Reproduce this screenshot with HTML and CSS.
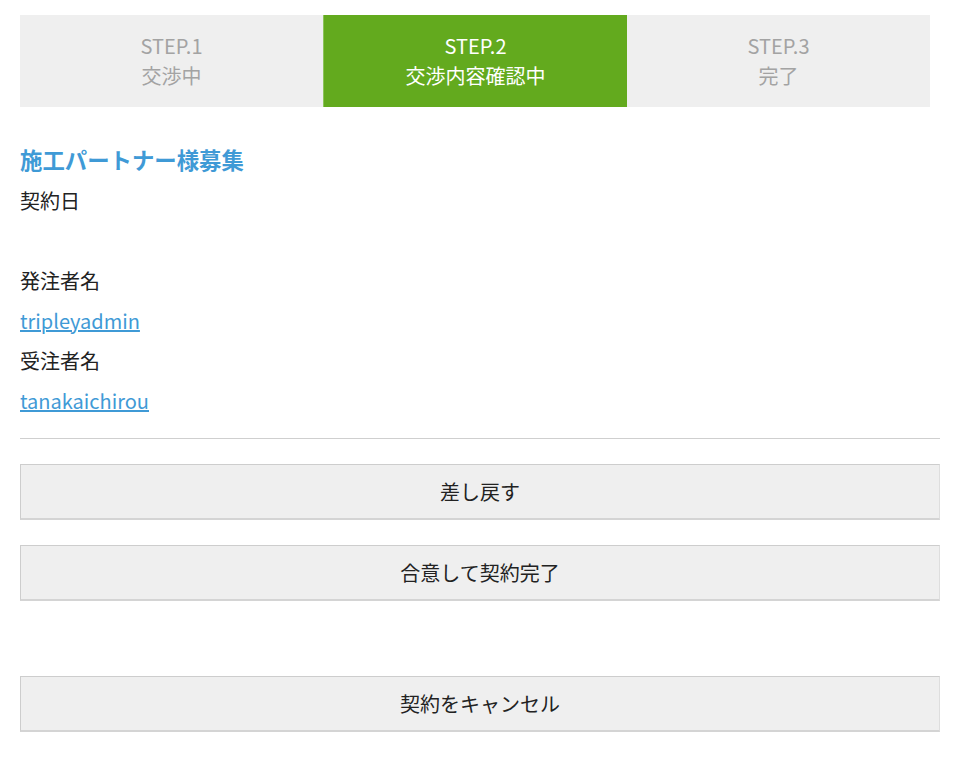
FILE: index.html
```html
<!DOCTYPE html>
<html lang="ja">
<head>
<meta charset="utf-8">
<title>交渉内容確認中</title>
<link rel="stylesheet" href="styles.css">
</head>
<body>
<div class="page">
  <ol class="steps">
    <li class="step"><span>STEP.1</span><span>交渉中</span></li>
    <li class="step active"><span>STEP.2</span><span>交渉内容確認中</span></li>
    <li class="step"><span>STEP.3</span><span>完了</span></li>
  </ol>

  <h2 class="title">施工パートナー様募集</h2>
  <dl class="info">
    <dt>契約日</dt>
    <dd></dd>
    <dt>発注者名</dt>
    <dd><a href="#">tripleyadmin</a></dd>
    <dt>受注者名</dt>
    <dd><a href="#">tanakaichirou</a></dd>
  </dl>
  <hr class="divider">
  <div class="actions">
    <button class="btn" type="button">差し戻す</button>
    <button class="btn" type="button">合意して契約完了</button>
  </div>
  <div class="actions cancel">
    <button class="btn" type="button">契約をキャンセル</button>
  </div>
</div>
</body>
</html>
```

FILE: styles.css
```css
* { box-sizing: border-box; }
html, body { margin: 0; padding: 0; background: #fff; }
body {
  font-family: "Noto Sans CJK JP", "Noto Sans", sans-serif;
  font-size: 20px;
  color: #222;
}
.page {
  padding: 15px 28px 0 20px;
}
.steps {
  list-style: none;
  margin: 0;
  padding: 0;
  display: flex;
  width: 910px;
}
.step {
  flex: 1;
  display: flex;
  flex-direction: column;
  align-items: center;
  background: #efefef;
  color: #a3a3a3;
  padding: 16px 0 16px;
  line-height: 30px;
  font-size: 20px;
}
.step.active {
  background: #63aa1e;
  color: #fff;
  border-left: 1px solid #8cc45a;
}
.title {
  margin: 30px 0 0;
  font-size: 22.4px;
  font-weight: bold;
  color: #3f9ad6;
  line-height: 44px;
}
.info { margin: 0; }
.info dt, .info dd {
  margin: 0;
  line-height: 40px;
  min-height: 40px;
}
.info a { color: #3f9ad6; text-decoration: underline; }
.divider {
  border: 0;
  border-top: 1px solid #cfcfcf;
  margin: 17px 0 25px;
}
.actions {
  display: flex;
  flex-direction: column;
  gap: 25px;
}
.cancel { margin-top: 75px; }
.btn {
  display: block;
  width: 100%;
  height: 56px;
  background: #efefef;
  border: 1px solid #cdcdcd;
  border-right-color: #dedede;
  border-bottom: 2px solid #d4d4d4;
  font-family: inherit;
  font-size: 20px;
  color: #222;
  padding: 0;
}
```
